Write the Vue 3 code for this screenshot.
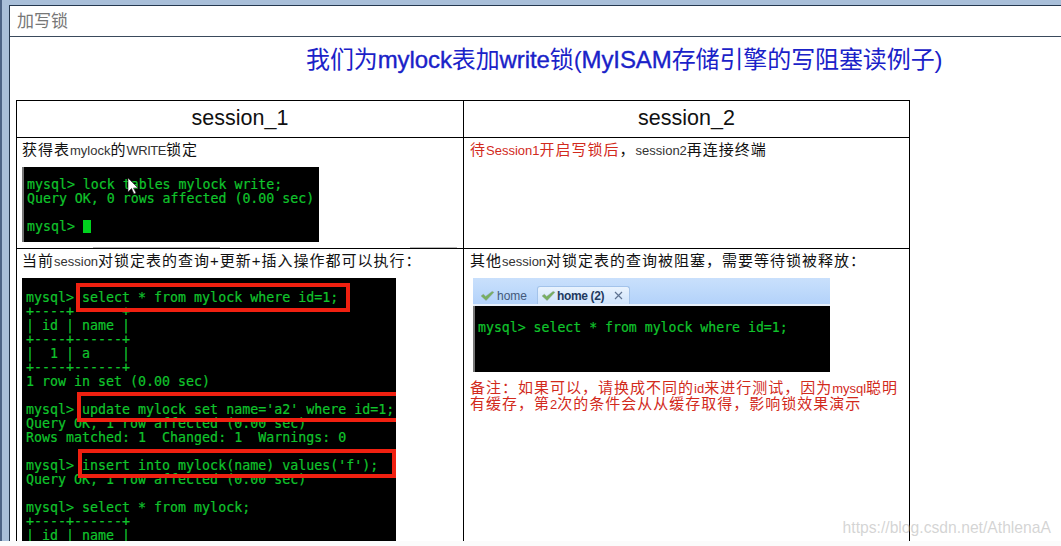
<script setup>
const t1 = `mysql> lock tables mylock write;
Query OK, 0 rows affected (0.00 sec)

mysql> `
const t2 = `mysql> select * from mylock where id=1;
+----+      +
| id | name |
+----+------+
|  1 | a    |
+----+------+
1 row in set (0.00 sec)

mysql> update mylock set name='a2' where id=1;
Query OK, 1 row affected (0.00 sec)
Rows matched: 1  Changed: 1  Warnings: 0

mysql> insert into mylock(name) values('f');
Query OK, 1 row affected (0.00 sec)

mysql> select * from mylock;
+----+------+
| id | name |`
</script>

<template>
  <div class="page">
    <div class="win">
      <div class="titlebar">加写锁</div>
      <h1 class="heading">我们为<span>mylock</span>表加<span>write</span>锁(<span>MyISAM</span>存储引擎的写阻塞读例子)</h1>
      <div class="table">
        <div class="cell head">session_1</div>
        <div class="cell head">session_2</div>
        <div class="cell row1">
          <p class="line">获得表<small>mylock</small>的<small class="caps">WRITE</small>锁定</p>
          <div class="term t-small"><pre>{{ t1 }}<i class="cursor"></i></pre></div>
          <b class="fade f1"></b><b class="fade f2"></b>
        </div>
        <div class="cell row1 right">
          <p class="line"><span class="red">待<small>Session1</small>开启写锁后</span>，<small>session2</small>再连接终端</p>
        </div>
        <div class="cell row2">
          <p class="line">当前<small>session</small>对锁定表的查询+更新+插入操作都可以执行：</p>
          <div class="term t-big">
            <pre>{{ t2 }}</pre>
            <b class="mark m1"></b><b class="mark m2"></b><b class="mark m3"></b>
          </div>
        </div>
        <div class="cell row2 right">
          <p class="line">其他<small>session</small>对锁定表的查询被阻塞，需要等待锁被释放：</p>
          <div class="shot">
            <div class="tabs">
              <span class="tab">
                <svg viewBox="0 0 16 12" width="15" height="11"><path d="M1 6.500 3.500 4.500 6 7 13 1.500 15 2.500 6.500 11.500z" fill="#76b060" stroke="#8a9a90" stroke-width=".5"/></svg>
                home
              </span>
              <span class="tab active">
                <svg viewBox="0 0 16 12" width="15" height="11"><path d="M1 6.500 3.500 4.500 6 7 13 1.500 15 2.500 6.500 11.500z" fill="#76b060" stroke="#8a9a90" stroke-width=".5"/></svg>
                home (2)
                <svg class="close" viewBox="0 0 9 9" width="9" height="9"><path d="M1 1 8 8M8 1 1 8" stroke="#5f7391" stroke-width="1.200"/></svg>
              </span>
            </div>
            <div class="term t-tab"><pre>mysql> select * from mylock where id=1;</pre></div>
          </div>
          <p class="note">备注：如果可以，请换成不同的<small>id</small>来进行测试，因为<small>mysql</small>聪明有缓存，第<small>2</small>次的条件会从从缓存取得，影响锁效果演示</p>
        </div>
      </div>
      <span class="watermark">https://blog.csdn.net/AthlenaA</span>
      <svg class="pointer" viewBox="0 0 12 18" width="12" height="18"><path d="M1 1v14l3.500-3.500 2.500 5.500 2-1-2.500-5H11z" fill="#fff" stroke="#222" stroke-width=".6"/></svg>
    </div>
  </div>
</template>

<style>
html, body { margin: 0; height: 100%; overflow: hidden; background: #fbfbfb; }
</style>

<style scoped>
.page {
  width: 1061px; height: 541px; padding-top: 5px; overflow: hidden; box-sizing: border-box;
  background: #a9bfd9; border-left: 2px solid #4d6486;
  font-family: "Liberation Sans", "Noto Sans CJK SC", sans-serif;
}
.win {
  position: relative; height: 536px; margin-left: 7px; box-sizing: border-box;
  background: #fff; border-top: 1px solid #24374e; border-left: 1px solid #24374e;
  overflow: hidden;
}
.titlebar {
  height: 31px; box-sizing: border-box; padding: 6px 0 0 7px;
  border-bottom: 1px solid #3a4a5c; color: #777; font-size: 17px; line-height: 20px;
}
.heading {
  margin: 0; padding-top: 8px; padding-left: 296px; height: 63px; box-sizing: border-box;
  font-size: 24px; font-weight: 400; line-height: 30px; letter-spacing: -.1px;
  color: #1a22c8; white-space: nowrap;
}
.heading span { -webkit-text-stroke: .35px #1a22c8; }
.table {
  width: 894px; margin-left: 6px; display: grid;
  grid-template-columns: 447px 446px; grid-template-rows: 37px 111px 1fr;
  height: 460px; box-sizing: border-box;
  border-top: 1px solid #000; border-left: 1px solid #000;
}
.cell { position: relative; border-right: 1px solid #000; border-bottom: 1px solid #000; padding: 0 0 0 5px; min-width: 0; overflow: hidden; }
.right { padding-left: 6px; }
.head { padding: 0; font-size: 21.500px; line-height: 35px; text-align: center; color: #111; }
.line { margin: 3px 0 0; font-size: 15px; line-height: 18px; letter-spacing: 1px; white-space: nowrap; color: #111; }
small { font-size: 13px; line-height: 1; letter-spacing: 0; color: #333; }
.caps { letter-spacing: -.5px; }
.red, .red small, .note, .note small { color: #d22a1c; }
.term { background: #000; color: #10c42c; position: relative; overflow: hidden; }
pre {
  margin: 0; font-family: "DejaVu Sans Mono", monospace; font-size: 13.300px;
  line-height: 14px; white-space: pre; -webkit-text-stroke: .2px #10c42c;
}
.t-small { width: 297px; height: 75px; margin-top: 8px; padding: 11px 0 0 3px; box-sizing: border-box; border-left: 2px solid #777; }
.t-small pre { font-size: 13.250px; }
.cursor { display: inline-block; width: 8px; height: 13px; background: #00d21e; vertical-align: -2px; }
.fade { position: absolute; bottom: 0; height: 1px; background: #bbb; }
.f1 { left: 76px; width: 127px; }
.f2 { left: 393px; width: 47px; }
.t-big { width: 374px; height: 263px; margin-top: 8px; padding: 13px 0 0 4px; box-sizing: border-box; }
.mark { position: absolute; border: 4px solid #f02010; box-sizing: border-box; }
.m1 { left: 54px; top: 5px; width: 274px; height: 29px; }
.m2 { left: 55px; top: 114px; width: 323px; height: 30px; }
.m3 { left: 56px; top: 171px; width: 318px; height: 29px; }
.shot { width: 357px; margin: 8px 0 0 3px; }
.tabs {
  height: 28px; box-sizing: border-box; display: flex; align-items: flex-end; gap: 7px; padding-left: 4px;
  background: linear-gradient(#c9e0fc, #b3d2fa); border-bottom: 2px solid #e8f0fb;
  font-size: 12px; color: #44597a;
}
.tab { display: flex; align-items: center; gap: 2px; height: 17px; padding: 0 3px; white-space: nowrap; }
.tab.active {
  gap: 1px; background: linear-gradient(#e9f3fe, #cfe3fb); border: 1px solid #a3c3ea; border-bottom: 0;
  border-radius: 3px 3px 0 0; color: #1f3a5f; font-weight: 700; letter-spacing: -.35px;
}
.close { margin-left: 9px; margin-right: 3px; }
.t-tab { height: 66px; padding: 15px 0 0 3px; box-sizing: border-box; border-left: 2px solid #777; }
.t-tab pre { font-size: 13.200px; }
.note { margin: 8px 0 0; font-size: 15px; line-height: 16px; letter-spacing: 1px; width: 432px; }
.watermark { position: absolute; right: 10px; bottom: 4px; font-size: 15.700px; line-height: 18px; color: rgba(170,170,170,.5); }
.pointer { position: absolute; left: 117px; top: 171px; }
</style>
